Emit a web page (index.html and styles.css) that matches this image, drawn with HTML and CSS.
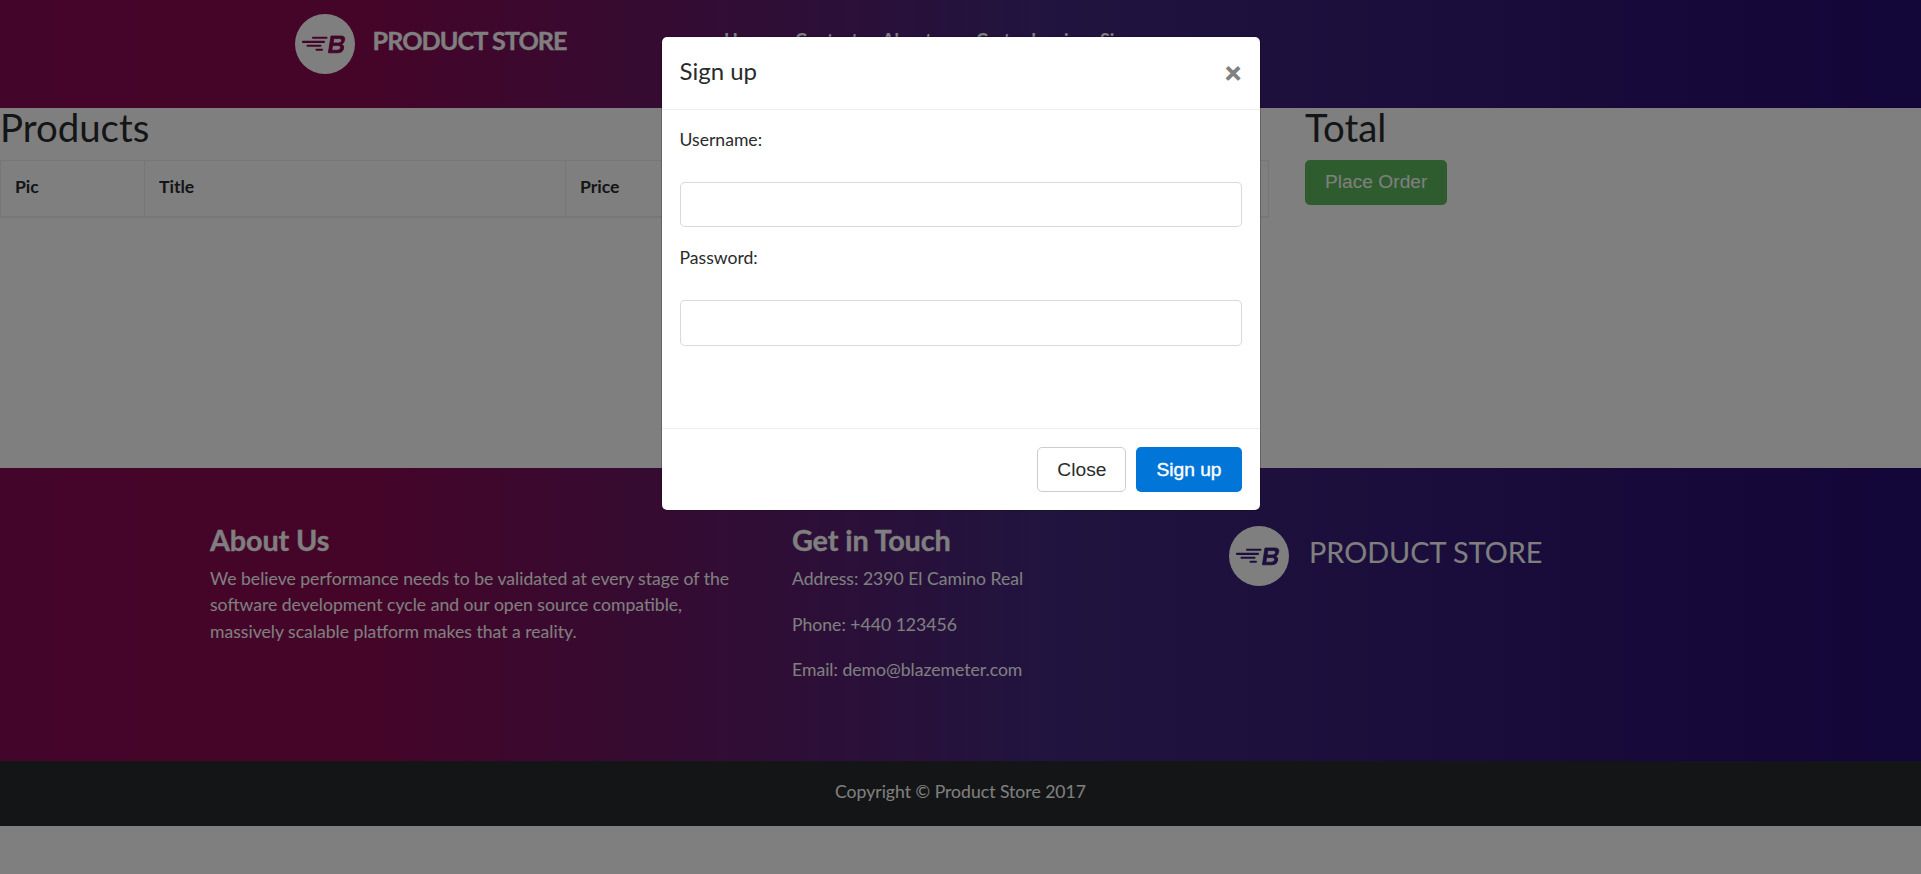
FILE: index.html
```html
<!DOCTYPE html>
<html lang="en">
<head>
<meta charset="utf-8">
<title>STORE</title>
<link rel="stylesheet" href="styles.css">
</head>
<body>
<svg class="sprite" aria-hidden="true">
  <symbol id="logo" viewBox="0 0 60 60">
    <circle cx="30" cy="30" r="30" fill="#fff"/>
    <path d="M18 23.800H31.500M8 27.900H29M12.500 31.800H25.500M21.500 35.800H27" fill="none" stroke="currentColor" stroke-width="2.100" stroke-linecap="round"/>
    <path d="M36 22H46Q50.600 22 49.600 26.300Q49 29.400 46.600 30.200Q49.400 31.200 48.600 34.800Q47.600 38.800 43 38.800H33.400ZM38.800 24.600L38.100 29H43.400Q46.100 29 46.600 26.700Q46.800 24.600 44.500 24.600ZM37.600 31.600L36.800 36.200H42.400Q45 36.200 45.600 33.700Q45.800 31.600 43.500 31.600Z" fill="currentColor" fill-rule="evenodd" stroke="currentColor" stroke-width=".8"/>
  </symbol>
</svg>
<div class="page">
  <nav class="navbar">
    <a class="brand"><svg class="logo logo-nav"><use href="#logo"/></svg><span>PRODUCT STORE</span></a>
    <ul class="menu"><li class="home">Home</li><li class="contact">Contact</li><li class="about">About us</li><li class="cart">Cart</li><li class="login">Log in</li><li>Sign up</li></ul>
  </nav>
  <main class="main">
    <section class="products">
      <h2>Products</h2>
      <table>
        <thead><tr><th class="pic">Pic</th><th class="title">Title</th><th class="price">Price</th><th>x</th></tr></thead>
      </table>
    </section>
    <section class="total">
      <h2>Total</h2>
      <button class="btn order">Place Order</button>
    </section>
  </main>
  <section class="info">
    <div class="about-us">
      <h4>About Us</h4>
      <p>We believe performance needs to be validated at every stage of the software development cycle and our open source compatible, massively scalable platform makes that a reality.</p>
    </div>
    <div class="touch">
      <h4>Get in Touch</h4>
      <p>Address: 2390 El Camino Real</p>
      <p>Phone: +440 123456</p>
      <p>Email: demo@blazemeter.com</p>
    </div>
    <div class="info-brand"><svg class="logo logo-info"><use href="#logo"/></svg><span>PRODUCT STORE</span></div>
  </section>
  <footer class="copyright">Copyright © Product Store 2017</footer>
</div>
<div class="backdrop">
  <div class="modal">
    <header class="modal-header"><h5>Sign up</h5><span class="close">×</span></header>
    <form class="modal-body">
      <label>Username:</label>
      <input type="text">
      <label>Password:</label>
      <input type="text" class="last">
    </form>
    <footer class="modal-footer"><button class="btn secondary">Close</button><button class="btn primary">Sign up</button></footer>
  </div>
</div>
</body>
</html>
```
FILE: styles.css
```css
* { box-sizing: border-box; }
body {
  margin: 0;
  height: 874px;
  overflow: hidden;
  background: #fff;
  color: #292b2c;
  font: 17.600px/1.5 Lato, sans-serif;
}
h2, h4, h5, p { margin: 0; }
.sprite { position: absolute; width: 0; height: 0; }
.navbar, .info {
  background: linear-gradient(to right, #880a54 0, #880a52 20%, #42287e 54%, #260c70 100%);
  color: #fff;
}
.navbar {
  display: flex;
  height: 108px;
  padding-left: 295px;
}
.brand {
  display: flex;
  width: 429px;
  padding-top: 14px;
  font-size: 25.200px;
  font-weight: 700;
  letter-spacing: -.93px;
}
.brand span { margin: 8px 0 0 17.500px; line-height: 37px; -webkit-text-stroke: .3px; }
.logo { width: 60px; height: 60px; flex: none; }
.logo-nav { color: #880850; }
.logo-info { color: #3a1c7c; }
.menu {
  display: flex;
  margin: 0;
  padding: 27px 0 0;
  list-style: none;
  font-size: 18px;
  font-weight: 700;
}
.home { width: 71px; }
.contact { width: 87px; }
.about { width: 94px; }
.cart { width: 55px; }
.login { width: 69px; }
.main { display: flex; height: 360px; }
.products { width: 1269px; }
.total { margin-left: 36px; }
h2 {
  height: 52px;
  font-size: 38.400px;
  font-weight: 400;
  line-height: 38px;
}
table { width: 1269px; border-collapse: collapse; table-layout: fixed; }
th {
  height: 56px;
  padding: 0 14px 2px;
  border: 1px solid #eceeef;
  border-bottom-width: 2px;
  text-align: left;
  font-weight: 700;
}
.pic { width: 144px; }
.title { width: 421px; }
.price { width: 350px; }
.btn {
  height: 45px;
  padding: 0 19px;
  border: 1px solid transparent;
  border-radius: 5px;
  font: 19.200px/24px "Liberation Sans", Arial, sans-serif;
}
.order { padding-bottom: 1px; background: #5cb85c; color: #fff; }
.info { display: flex; height: 293px; padding: 57px 0 0 210px; }
.info h4 {
  margin-bottom: 10px;
  font-size: 28.800px;
  font-weight: 700;
  line-height: 31px;
  letter-spacing: -.12px;
  -webkit-text-stroke: .3px;
}
.info p { line-height: 26.400px; }
.about-us { width: 582px; padding-right: 45px; }
.touch { width: 437px; }
.touch p { margin-bottom: 19.200px; }
.info-brand { display: flex; padding-top: 1px; font-size: 28.800px; }
.info-brand span { margin: 5px 0 0 20px; }
.copyright {
  height: 65px;
  background: #292b2c;
  color: #fff;
  text-align: center;
  line-height: 61px;
}
.backdrop {
  position: absolute;
  inset: 0;
  display: flex;
  justify-content: center;
  align-items: flex-start;
  padding-top: 36px;
  background: rgba(0, 0, 0, .5);
}
.modal {
  width: 600px;
  height: 475px;
  border: 1px solid rgba(0, 0, 0, .2);
  border-radius: 6px;
  background: #fff;
  background-clip: padding-box;
}
.modal-header {
  display: flex;
  justify-content: space-between;
  height: 73px;
  padding: 17px 18px;
  border-bottom: 1px solid #eceeef;
}
.modal-header h5 { font-size: 24px; font-weight: 400; line-height: 34px; }
.close { color: #808080; font-size: 28.800px; font-weight: 700; line-height: 36px; -webkit-text-stroke: 1px; }
.modal-body { display: flex; flex-direction: column; height: 318px; padding: 17px 18px; }
.modal-body label { height: 55px; }
.modal-body input {
  height: 45px;
  margin-bottom: 18px;
  border: 1px solid rgba(0, 0, 0, .15);
  border-radius: 5px;
}
.modal-body .last { height: 46px; }
.modal-footer {
  display: flex;
  justify-content: flex-end;
  gap: 10px;
  padding: 18px;
  border-top: 1px solid #eceeef;
}
.secondary { border-color: #ccc; background: #fff; color: #292b2c; }
.primary { background: #0275d8; color: #fff; -webkit-text-stroke: .4px; }
```
